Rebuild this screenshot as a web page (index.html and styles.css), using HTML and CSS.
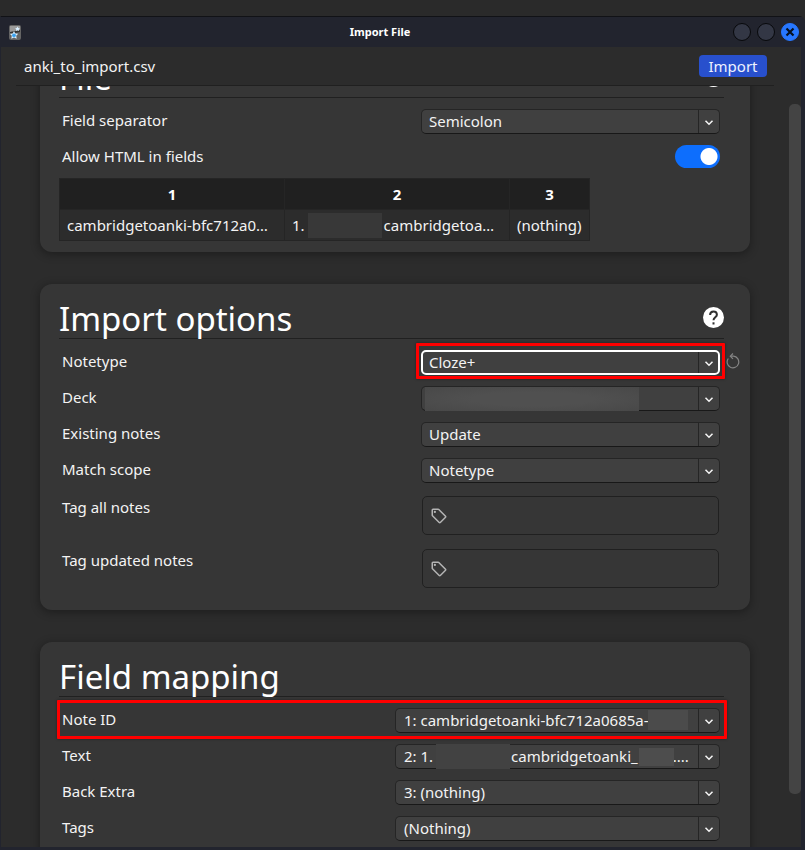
FILE: index.html
```html
<!DOCTYPE html>
<html lang="en">
<head>
<meta charset="utf-8">
<title>Import File</title>
<link rel="stylesheet" href="styles.css">
</head>
<body>
<svg class="defs" aria-hidden="true">
  <symbol id="chevron" viewBox="0 0 12 12"><path d="M2.500 4.700 6 8.200l3.500-3.500" fill="none" stroke="#f5f5f5" stroke-width="1.500"/></symbol>
  <symbol id="tag" viewBox="0 0 24 24"><path d="M21.410 11.580l-9-9A2 2 0 0 0 11 2H4a2 2 0 0 0-2 2v7a2 2 0 0 0 .59 1.420l9 9A2 2 0 0 0 13 22a2 2 0 0 0 1.410-.59l7-7A2 2 0 0 0 22 13a2 2 0 0 0-.59-1.420M13 20l-9-9V4h7l9 9M6.500 5A1.500 1.500 0 1 1 5 6.500 1.500 1.500 0 0 1 6.500 5z" fill="#b4b4b4"/></symbol>
  <symbol id="help" viewBox="0 0 21 21"><circle cx="10.500" cy="10.500" r="10.500" fill="#fff"/><path d="M7.100 7.900C7.100 5.800 8.500 4.400 10.500 4.400s3.400 1.400 3.400 3.300c0 2.500-3.400 2.800-3.400 5.600" fill="none" stroke="#303030" stroke-width="2"/><path d="M9.500 15.300h2v2.200h-2z" fill="#303030"/></symbol>
</svg>
<div class="window">
  <div class="titlebar">
    <svg class="app-icon" viewBox="0 0 12 15" aria-hidden="true">
      <rect x="0" y="0" width="12" height="15" rx="2" fill="#646464"/>
      <path d="M1 1h10v5L1 7z" fill="#9a9a9a"/>
      <path d="M1 7l10-2v2L1 9z" fill="#333"/>
      <path d="M5 6l1.300 2.500 2.900.3-2 2 .5 2.900L5 12.500l-2.700 1.200.5-2.900-2-2 2.900-.3z" fill="#d8efff"/>
      <circle cx="5" cy="10.300" r="1.900" fill="#3ba2ee"/>
      <path d="M8.500 1.500l.7 1.500 1.600.2-1 1.200.2 1.600-1.500-.7-1.500.7.200-1.600-1-1.200 1.600-.2z" fill="#d8efff"/>
    </svg>
    <div class="window-title">Import File</div>
    <div class="window-buttons">
      <button type="button" class="win-btn" aria-label="Minimize"></button>
      <button type="button" class="win-btn" aria-label="Maximize"></button>
      <button type="button" class="win-btn close" aria-label="Close"><svg viewBox="0 0 10 10"><path d="M1.500 1.500l7 7M8.500 1.500l-7 7" stroke="#06101f" stroke-width="2.200"/></svg></button>
    </div>
  </div>
  <header class="file-header">
    <span>anki_to_import.csv</span>
    <button type="button" class="import-btn">Import</button>
  </header>
  <div class="viewport">
    <main class="cards">
      <section class="card first">
        <div class="card-head"><h1>File</h1>
          <button type="button" class="help" aria-label="Help for file"><svg><use href="#help"/></svg></button></div>
        <div class="rows">
          <div class="row"><label for="sep">Field separator</label>
            <div class="select"><select id="sep"><option>Semicolon</option></select><svg><use href="#chevron"/></svg></div></div>
          <div class="row"><label for="html">Allow HTML in fields</label>
            <input type="checkbox" class="switch" id="html" checked></div>
        </div>
        <table>
          <colgroup><col class="wide"><col class="wide"><col class="narrow"></colgroup>
          <thead><tr><th>1</th><th>2</th><th>3</th></tr></thead>
          <tbody><tr><td>cambridgetoanki-bfc712a0…</td><td><span class="split">1.<i class="smudge"></i>cambridgetoa…</span></td><td>(nothing)</td></tr></tbody>
        </table>
      </section>

      <section class="card">
        <div class="card-head"><h1>Import options</h1>
          <button type="button" class="help" aria-label="Help for import options"><svg><use href="#help"/></svg></button></div>
        <div class="rows">
          <div class="row"><label for="notetype">Notetype</label>
            <div class="select focused"><select id="notetype"><option>Cloze+</option></select><svg><use href="#chevron"/></svg>
              <button type="button" class="revert" aria-label="Restore default"><svg viewBox="0 0 14 16"><path d="M2.300 5.500A5.800 5.800 0 1 0 7.500 3.200H5" fill="none" stroke="#858585" stroke-width="1.200"/><path d="M7 .5 4.300 3.200 7 5.900" fill="none" stroke="#858585" stroke-width="1.200"/></svg></button></div></div>
          <div class="row"><label for="deck">Deck</label>
            <div class="select"><select id="deck"><option></option></select><i class="smudge deck"></i><svg><use href="#chevron"/></svg></div></div>
          <div class="row"><label for="existing">Existing notes</label>
            <div class="select"><select id="existing"><option>Update</option></select><svg><use href="#chevron"/></svg></div></div>
          <div class="row"><label for="scope">Match scope</label>
            <div class="select"><select id="scope"><option>Notetype</option></select><svg><use href="#chevron"/></svg></div></div>
        </div>
        <div class="rows tags">
          <div class="row"><label for="tagall">Tag all notes</label>
            <div class="tagbox"><svg><use href="#tag"/></svg><input type="text" id="tagall"></div></div>
          <div class="row"><label for="tagupd">Tag updated notes</label>
            <div class="tagbox"><svg><use href="#tag"/></svg><input type="text" id="tagupd"></div></div>
        </div>
      </section>

      <section class="card mapping">
        <div class="card-head"><h1>Field mapping</h1></div>
        <div class="rows">
          <div class="row marked"><label for="noteid">Note ID</label>
            <div class="select"><select id="noteid"><option>1: cambridgetoanki-bfc712a0685a-</option></select><i class="smudge id"></i><svg><use href="#chevron"/></svg></div></div>
          <div class="row"><label for="text">Text</label>
            <div class="select"><select id="text"><option>2: 1.&nbsp;&nbsp;&nbsp;&nbsp;&nbsp;&nbsp;&nbsp;&nbsp;&nbsp;&nbsp;&nbsp;&nbsp;&nbsp;&nbsp;&nbsp;&nbsp;&nbsp;&nbsp;&nbsp;&nbsp;cambridgetoanki_&nbsp;&nbsp;&nbsp;&nbsp;&nbsp;&nbsp;&nbsp;&nbsp;&nbsp;....</option></select><i class="smudge text-a"></i><i class="smudge text-b"></i><svg><use href="#chevron"/></svg></div></div>
          <div class="row"><label for="back">Back Extra</label>
            <div class="select"><select id="back"><option>3: (nothing)</option></select><svg><use href="#chevron"/></svg></div></div>
          <div class="row"><label for="tags">Tags</label>
            <div class="select"><select id="tags"><option>(Nothing)</option></select><svg><use href="#chevron"/></svg></div></div>
        </div>
      </section>
    </main>
    <div class="scrollbar"><div class="thumb"></div></div>
  </div>
</div>
</body>
</html>
```
FILE: styles.css
```css
* { box-sizing: border-box; }

body {
  margin: 0;
  height: 100vh;
  padding-top: 16px;
  overflow: hidden;
  background: #2a2a2a;
  color: #f3f3f3;
  font: 15px/23px "Noto Sans", sans-serif;
}

button, input, select { font: inherit; color: inherit; margin: 0; padding: 0; border: 0; background: none; }
.defs { position: absolute; width: 0; height: 0; }

.window {
  display: flex;
  flex-direction: column;
  height: 100%;
  border: solid #22242e;
  border-width: 0 4px 3px 1px;
  border-top: 1px solid #111216;
  border-radius: 0 6px 0 0;
  background: #2c2c2c;
}

.titlebar {
  flex: none;
  display: flex;
  align-items: center;
  height: 30px;
  margin-right: -4px;
  padding: 0 6px 0 8px;
  background: #22242e;
  border-radius: 0 6px 0 0;
}
.app-icon { width: 12px; height: 15px; }
.window-title { flex: 1; padding-left: 6px; text-align: center; font-size: 11px; font-weight: 700; line-height: 20px; color: #fff; }
.window-buttons { display: flex; gap: 6px; }
.win-btn {
  display: grid;
  place-items: center;
  width: 18px;
  height: 18px;
  border: 1px solid #07080b;
  border-radius: 50%;
  background: #333745;
}
.win-btn.close { background: #2777ff; border-color: #2777ff; }
.win-btn svg { width: 10px; height: 10px; }

.file-header {
  flex: none;
  display: flex;
  align-items: center;
  justify-content: space-between;
  height: 39px;
  margin: 0 27px 0 15px;
  padding: 0 7px 0 8px;
  border-bottom: 1px solid #202020;
}
.import-btn { width: 68px; height: 22px; border-radius: 4px; background: #2850cd; line-height: 22px; color: #eef2ff; }

.viewport { flex: 1; min-height: 0; display: flex; overflow: hidden; }
.cards { flex: 1; min-width: 0; padding: 0 39px; }
.scrollbar { flex: none; width: 12px; padding: 18px 0 53px; }
.thumb { height: 100%; border-radius: 5px; background: #444; }

.card {
  margin-bottom: 32px;
  padding: 10px 26px 22px 19px;
  border-radius: 12px;
  background: #363636;
  box-shadow: 0 2px 8px 1px rgba(0, 0, 0, .3);
}
.card.first { margin-top: -43px; padding-bottom: 11px; }

.card-head { display: flex; justify-content: space-between; height: 45px; border-bottom: 1px solid #202020; }
h1 { margin: 0; font-size: 33px; font-weight: 400; line-height: 50px; color: #fff; }
.help { width: 21px; height: 21px; margin-top: 13px; }
.help svg { display: block; width: 21px; height: 21px; }

.rows { display: grid; gap: 11px; margin-top: 11px; padding: 0 4px 0 3px; }
.rows.tags { gap: 14px; margin-top: 13px; }
.row { position: relative; display: grid; grid-template-columns: minmax(0, 1fr) 299px; align-items: start; }
.mapping .row { grid-template-columns: minmax(0, 1fr) 325px; }

.select { position: relative; }
.select select {
  display: block;
  width: 100%;
  height: 25px;
  padding: 0 28px 0 7px;
  border: 1px solid #252525;
  border-bottom-color: #181818;
  border-radius: 5px;
  background: linear-gradient(#252525, #252525) right 20px top / 1px 100% no-repeat #404040;
  appearance: none;
}
.mapping select { padding-left: 8px; }
.select > svg { position: absolute; right: 5px; top: 7px; width: 12px; height: 12px; pointer-events: none; }
.focused select { outline: 2px solid #fff; outline-offset: -2px; }
.focused::before, .marked::after {
  content: "";
  position: absolute;
  inset: -7px -5px -4px;
  border: 3px solid #f00;
  border-radius: 1px;
  box-shadow: 0 0 3px rgba(0, 0, 0, .4);
  pointer-events: none;
}
.marked::after { inset: -8px -7px -6px -5px; }
.revert { position: absolute; left: 100%; top: 2px; margin-left: 6px; width: 14px; height: 18px; }
.revert svg { display: block; width: 14px; height: 16px; }

.smudge { background: #474747; }
.select .smudge { position: absolute; pointer-events: none; }
.smudge.deck { left: 4px; top: 1px; width: 214px; height: 24px; background: radial-gradient(ellipse, #505050 40%, #484848); }
.smudge.id { right: 32px; top: 2px; width: 40px; height: 20px; background: #4b4b4b; }
.smudge.text-a { left: 41px; top: 0; width: 74px; height: 25px; background: #424242; }
.smudge.text-b { right: 46px; top: 4px; width: 35px; height: 18px; background: #4d4d4d; }

.switch {
  justify-self: end;
  width: 45px;
  height: 23px;
  border-radius: 12px;
  background: radial-gradient(circle at 34px 50%, #fff 8px, #0d6efd 9px);
  appearance: none;
}

.tagbox {
  display: flex;
  align-items: center;
  gap: 6px;
  height: 39px;
  margin: 0 1px;
  padding: 0 7px;
  border: 1px solid #202020;
  border-radius: 5px;
}
.tagbox svg { flex: none; width: 18px; height: 18px; }
.tagbox input { flex: 1; min-width: 0; outline: 0; }

table { width: 530px; margin-top: 10px; table-layout: fixed; border-collapse: collapse; background: #2c2c2c; }
.wide { width: 225px; }
.narrow { width: 80px; }
th, td { height: 31px; padding: 0 7px; border: 1px solid #252525; white-space: nowrap; text-align: left; }
th { background: #202020; text-align: center; font-weight: 700; color: #fff; }
.split { display: flex; align-items: center; }
.split .smudge { width: 74px; height: 25px; margin: 0 2px 0 3px; background: #383838; }
```
